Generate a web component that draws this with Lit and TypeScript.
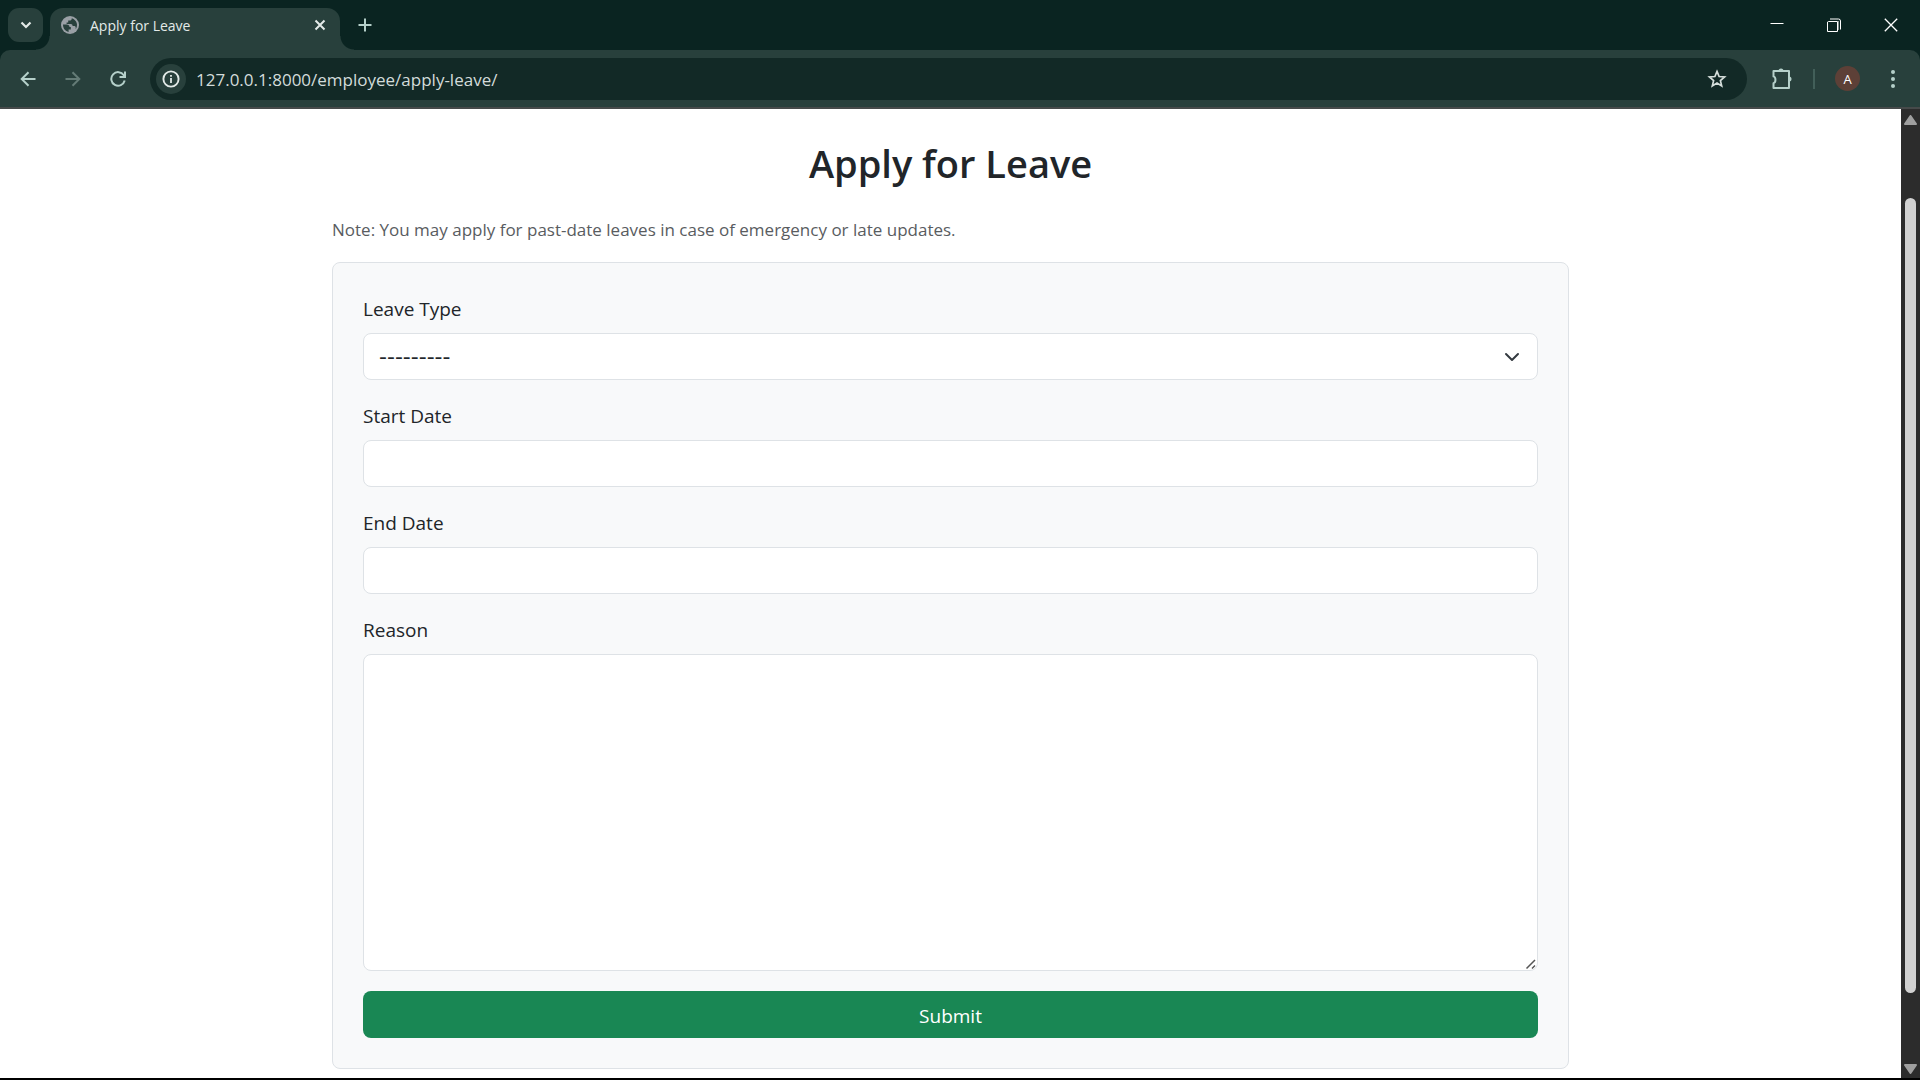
import { LitElement, html, css, svg } from "lit";
import { customElement, property } from "lit/decorators.js";

const stroke = (size: number, body: unknown, width = 2) => html`
  <svg width=${size} height=${size} viewBox="0 0 ${size} ${size}" fill="none" stroke="currentColor"
    stroke-width=${width} aria-hidden="true">${body}</svg>`;

const icons = {
  chevron: stroke(20, svg`<path d="M5.5 7.5 10 12l4.500-4.500"/>`, 2.2),
  globe: html`<svg width="18" height="18" viewBox="0 0 18 18" aria-hidden="true">
    <circle cx="9" cy="9" r="9" fill="#9aa0a6"/>
    <path fill="#28403c" d="M2 8.600h3.600c1.900 0 2.900 1 2.900 2.400h1.300v2.600H7.600V16C4.300 15.400 2 12.600 2 8.600zM10.800 2.200c0 1.600-.8 2.300-2.300 2.300H7.200v1.900H5.600v1.500h4c1.500 0 2 .8 2 2.100h1.500c1 0 1.600.6 1.600 1.600v1.700c2.700-3.900 1.300-9.300-3.900-11.100z"/>
  </svg>`,
  cross: stroke(14, svg`<path d="m2.500 2.500 9 9m0-9-9 9"/>`),
  plus: stroke(14, svg`<path d="M7 .5v13M.5 7h13"/>`),
  minimize: stroke(14, svg`<path d="M.5 5.500h13"/>`, 1),
  restore: stroke(14, svg`<path d="M1.500 3.500h9v10h-10v-9.500z"/><path d="M3 1h8.500a2 2 0 0 1 2 2v8.500"/><path d="M11.500 3v9" opacity=".5"/>`, 1),
  close: stroke(14, svg`<path d="m.8.8 12.400 12.400m0-12.400L.8 13.200"/>`, 1.3),
  back: stroke(16, svg`<path d="M15.500 8H2M8.500 1.200 1.700 8l6.800 6.800"/>`),
  forward: stroke(16, svg`<path d="M.5 8H14M7.500 1.200 14.300 8l-6.800 6.800"/>`),
  reload: stroke(16, svg`<path d="M14.700 9.600A6.800 6.800 0 1 1 13.800 4.200L14.500 5.500"/><path d="M15 .5V6H9.500"/>`),
  info: html`<svg width="18" height="18" viewBox="0 0 18 18" aria-hidden="true">
    <circle cx="9" cy="9" r="7.600" fill="none" stroke="currentColor" stroke-width="1.900"/>
    <path d="M8.100 8h1.800v5H8.100zM8.100 5h1.800v1.800H8.100z" fill="currentColor"/></svg>`,
  star: stroke(20, svg`<path d="m10 2.400 2.100 5.100 5.500.5-4.200 3.600 1.300 5.400L10 14.100 5.300 17l1.300-5.400L2.400 8l5.500-.5z"/>`, 1.7),
  puzzle: html`<svg width="22" height="22" viewBox="0 0 22 22" aria-hidden="true">
    <path fill="none" stroke="currentColor" stroke-width="2" stroke-linejoin="round"
      d="M2.500 3h15.500v17H2.500v-4.800c2.600-.6 2.600-6.200 0-6.800z"/>
    <path fill="currentColor" d="M7.500 3a2.500 2.500 0 0 1 5 0zM18 8.500a2.500 2.500 0 0 1 0 5z"/></svg>`,
  kebab: html`<svg width="6" height="20" viewBox="0 0 6 20" fill="currentColor" aria-hidden="true">
    <circle cx="3" cy="3" r="2"/><circle cx="3" cy="10" r="2"/><circle cx="3" cy="17" r="2"/></svg>`,
};

@customElement("browser-chrome")
class BrowserChrome extends LitElement {
  @property() pageTitle = "";
  @property() address = "";

  static styles = css`
    :host { display: block; background: #0a2421; color: #e3eae8; font-family: "Segoe UI", "Open Sans", "Noto Sans", sans-serif; }
    button { display: grid; place-items: center; flex: none; margin: 0; padding: 0; border: 0; background: none; color: inherit; font: inherit; }
    svg { display: block; }
    .strip { display: flex; align-items: stretch; height: 50px; }
    .search { width: 35px; height: 34px; margin: 8px 7px 0 8px; border-radius: 11px; background: #28403c; }
    .tab { position: relative; display: flex; align-items: center; gap: 11px; width: 290px; height: 42px; margin-top: 8px; padding: 0 12px 8px 11px; box-sizing: border-box; border-radius: 13px 13px 0 0; background: #28403c; font-size: 14px; }
    .tab::before, .tab::after { content: ""; position: absolute; bottom: 0; width: 14px; height: 14px; }
    .tab::before { right: 100%; background: radial-gradient(circle at 0 0, transparent 13px, #28403c 14px); }
    .tab::after { left: 100%; background: radial-gradient(circle at 100% 0, transparent 13px, #28403c 14px); }
    .title { flex: 1; white-space: nowrap; }
    .tabclose { width: 16px; height: 16px; }
    .new { width: 34px; height: 34px; margin: 8px 0 0 8px; color: #b5d0ca; }
    .window { display: flex; margin-left: auto; padding-right: 1px; color: #fff; }
    .window button { width: 57px; height: 49px; }
    .bar { display: flex; align-items: center; height: 57px; padding: 0 12px 0 13px; box-sizing: border-box; background: #28403c; border-radius: 10px 10px 0 0; color: #b5d0ca; }
    .edge { height: 2px; background: #464a4a; }
    .nav { display: flex; gap: 15px; }
    .nav button { width: 30px; height: 30px; }
    .nav .off { color: #647b76; }
    .box { display: flex; align-items: center; flex: 1; height: 42px; margin-left: 17px; padding: 0 16px 0 6px; box-sizing: border-box; border-radius: 21px; background: #122926; color: #d5dedb; }
    .info { width: 30px; height: 30px; border-radius: 50%; background: #28403c; color: #e3eae8; }
    .url { flex: 1; min-width: 0; height: 30px; margin: 0 12px 0 10px; padding: 2px 0 0; box-sizing: border-box; border: 0; outline: 0; background: none; color: #d3dcda; font: 17px/28px "Segoe UI", "Open Sans", "Noto Sans", sans-serif; }
    .star { width: 28px; height: 28px; }
    .ext { width: 34px; height: 34px; margin-left: 18px; }
    .sep { width: 2px; height: 20px; margin: 0 20px 0 14px; background: #425f59; }
    .avatar { width: 25px; height: 25px; border-radius: 50%; background: #5d4037; color: #fff; font-size: 13px; }
    .menu { width: 30px; height: 30px; margin-left: 18px; }
  `;

  render() {
    return html`
      <div class="strip">
        <button class="search" aria-label="Search tabs">${icons.chevron}</button>
        <div class="tab">
          ${icons.globe}<span class="title">${this.pageTitle}</span>
          <button class="tabclose" aria-label="Close tab">${icons.cross}</button>
        </div>
        <button class="new" aria-label="New tab">${icons.plus}</button>
        <div class="window">
          <button aria-label="Minimize">${icons.minimize}</button>
          <button aria-label="Restore">${icons.restore}</button>
          <button aria-label="Close">${icons.close}</button>
        </div>
      </div>
      <div class="bar">
        <div class="nav">
          <button aria-label="Back">${icons.back}</button>
          <button class="off" aria-label="Forward">${icons.forward}</button>
          <button aria-label="Reload">${icons.reload}</button>
        </div>
        <div class="box">
          <button class="info" aria-label="Site information">${icons.info}</button>
          <input class="url" type="text" aria-label="Address" .value=${this.address} />
          <button class="star" aria-label="Bookmark">${icons.star}</button>
        </div>
        <button class="ext" aria-label="Extensions">${icons.puzzle}</button>
        <div class="sep"></div>
        <button class="avatar" aria-label="Profile">A</button>
        <button class="menu" aria-label="Menu">${icons.kebab}</button>
      </div>
      <div class="edge"></div>
    `;
  }
}

@customElement("leave-form")
class LeaveForm extends LitElement {
  static styles = css`
    :host { display: block; max-width: 1237px; margin: 0 auto; padding: 30px 0 9px; color: #212529; font: 19px/30px "Segoe UI", "Open Sans", "Noto Sans", sans-serif; }
    .heading { margin: 0 0 29px; font-size: 38px; line-height: 48px; font-weight: 600; text-align: center; }
    .note { margin: 0 0 19px; font-size: 17px; line-height: 27px; color: #595c5f; }
    .card { padding: 30px; border: 1px solid #dee2e6; border-radius: 8px; background: #f8f9fa; }
    .field { margin-bottom: 20px; }
    .label { display: block; width: fit-content; margin-bottom: 10px; padding-top: 2px; line-height: 28px; }
    .control { display: block; width: 100%; height: 47px; box-sizing: border-box; margin: 0; padding: 7px 15px; border: 1px solid #dee2e6; border-radius: 8px; background: #fff; color: inherit; font: inherit; outline: 0; }
    .pick { position: relative; }
    .pick select { appearance: none; font: 22px/30px "DejaVu Sans", sans-serif; }
    .pick svg { position: absolute; right: 18px; top: 16px; pointer-events: none; }
    .area { height: auto; min-height: 317px; resize: vertical; }
    .area::-webkit-resizer { background: url("data:image/svg+xml,%3Csvg xmlns='http://www.w3.org/2000/svg' width='15' height='15' fill='none' stroke='%23555' stroke-width='1.5'%3E%3Cpath d='M4.500 13.500l8.500-8.500M10 13.500l3-3'/%3E%3C/svg%3E") no-repeat right bottom; }
    .submit { display: block; width: 100%; height: 47px; box-sizing: border-box; padding: 2px 0 0; border: 0; border-radius: 8px; background: #198754; color: #fff; font: inherit; }
  `;

  render() {
    return html`
      <h2 class="heading">Apply for Leave</h2>
      <p class="note">Note: You may apply for past-date leaves in case of emergency or late updates.</p>
      <form class="card" @submit=${(e: Event) => e.preventDefault()}>
        <div class="field">
          <label class="label" for="type">Leave Type</label>
          <div class="pick">
            <select class="control" id="type"><option value="">---------</option></select>
            <svg width="16" height="16" viewBox="0 0 16 16" fill="none" stroke="#343a40" stroke-width="2"
              stroke-linecap="round" stroke-linejoin="round" aria-hidden="true"><path d="m2 5 6 6 6-6"/></svg>
          </div>
        </div>
        <div class="field">
          <label class="label" for="start">Start Date</label>
          <input class="control" id="start" type="text" />
        </div>
        <div class="field">
          <label class="label" for="end">End Date</label>
          <input class="control" id="end" type="text" />
        </div>
        <div class="field">
          <label class="label" for="reason">Reason</label>
          <textarea class="control area" id="reason" rows="10"></textarea>
        </div>
        <button class="submit" type="submit">Submit</button>
      </form>
    `;
  }
}

@customElement("app-root")
class AppRoot extends LitElement {
  static styles = css`
    :host { display: flex; flex-direction: column; min-height: 100vh; box-sizing: border-box; border-bottom: 2px solid #000; background: #fff; }
    .view { display: flex; flex: 1; }
    .page { flex: 1; min-width: 0; }
    .scroll { display: grid; grid-template-rows: 22px 67fr 795fr 67fr 18px; justify-items: center; width: 19px; background: #2c2c2c; }
    .thumb { grid-row: 3; width: 11px; border-radius: 6px; background: #d1d1d1; }
    .up { grid-row: 1; align-self: center; }
    .down { grid-row: 5; align-self: center; }
  `;

  render() {
    return html`
      <browser-chrome .pageTitle=${"Apply for Leave"} .address=${"127.0.0.1:8000/employee/apply-leave/"}></browser-chrome>
      <div class="view">
        <main class="page"><leave-form></leave-form></main>
        <div class="scroll" aria-hidden="true">
          <svg class="up" width="13" height="10" viewBox="0 0 13 10" fill="#9f9f9f" stroke="#9f9f9f" stroke-width="2" stroke-linejoin="round"><path d="M6.500 1 12 9H1z"/></svg>
          <div class="thumb"></div>
          <svg class="down" width="13" height="10" viewBox="0 0 13 10" fill="#9f9f9f" stroke="#9f9f9f" stroke-width="2" stroke-linejoin="round"><path d="M1 1h11L6.500 9z"/></svg>
        </div>
      </div>
    `;
  }
}
